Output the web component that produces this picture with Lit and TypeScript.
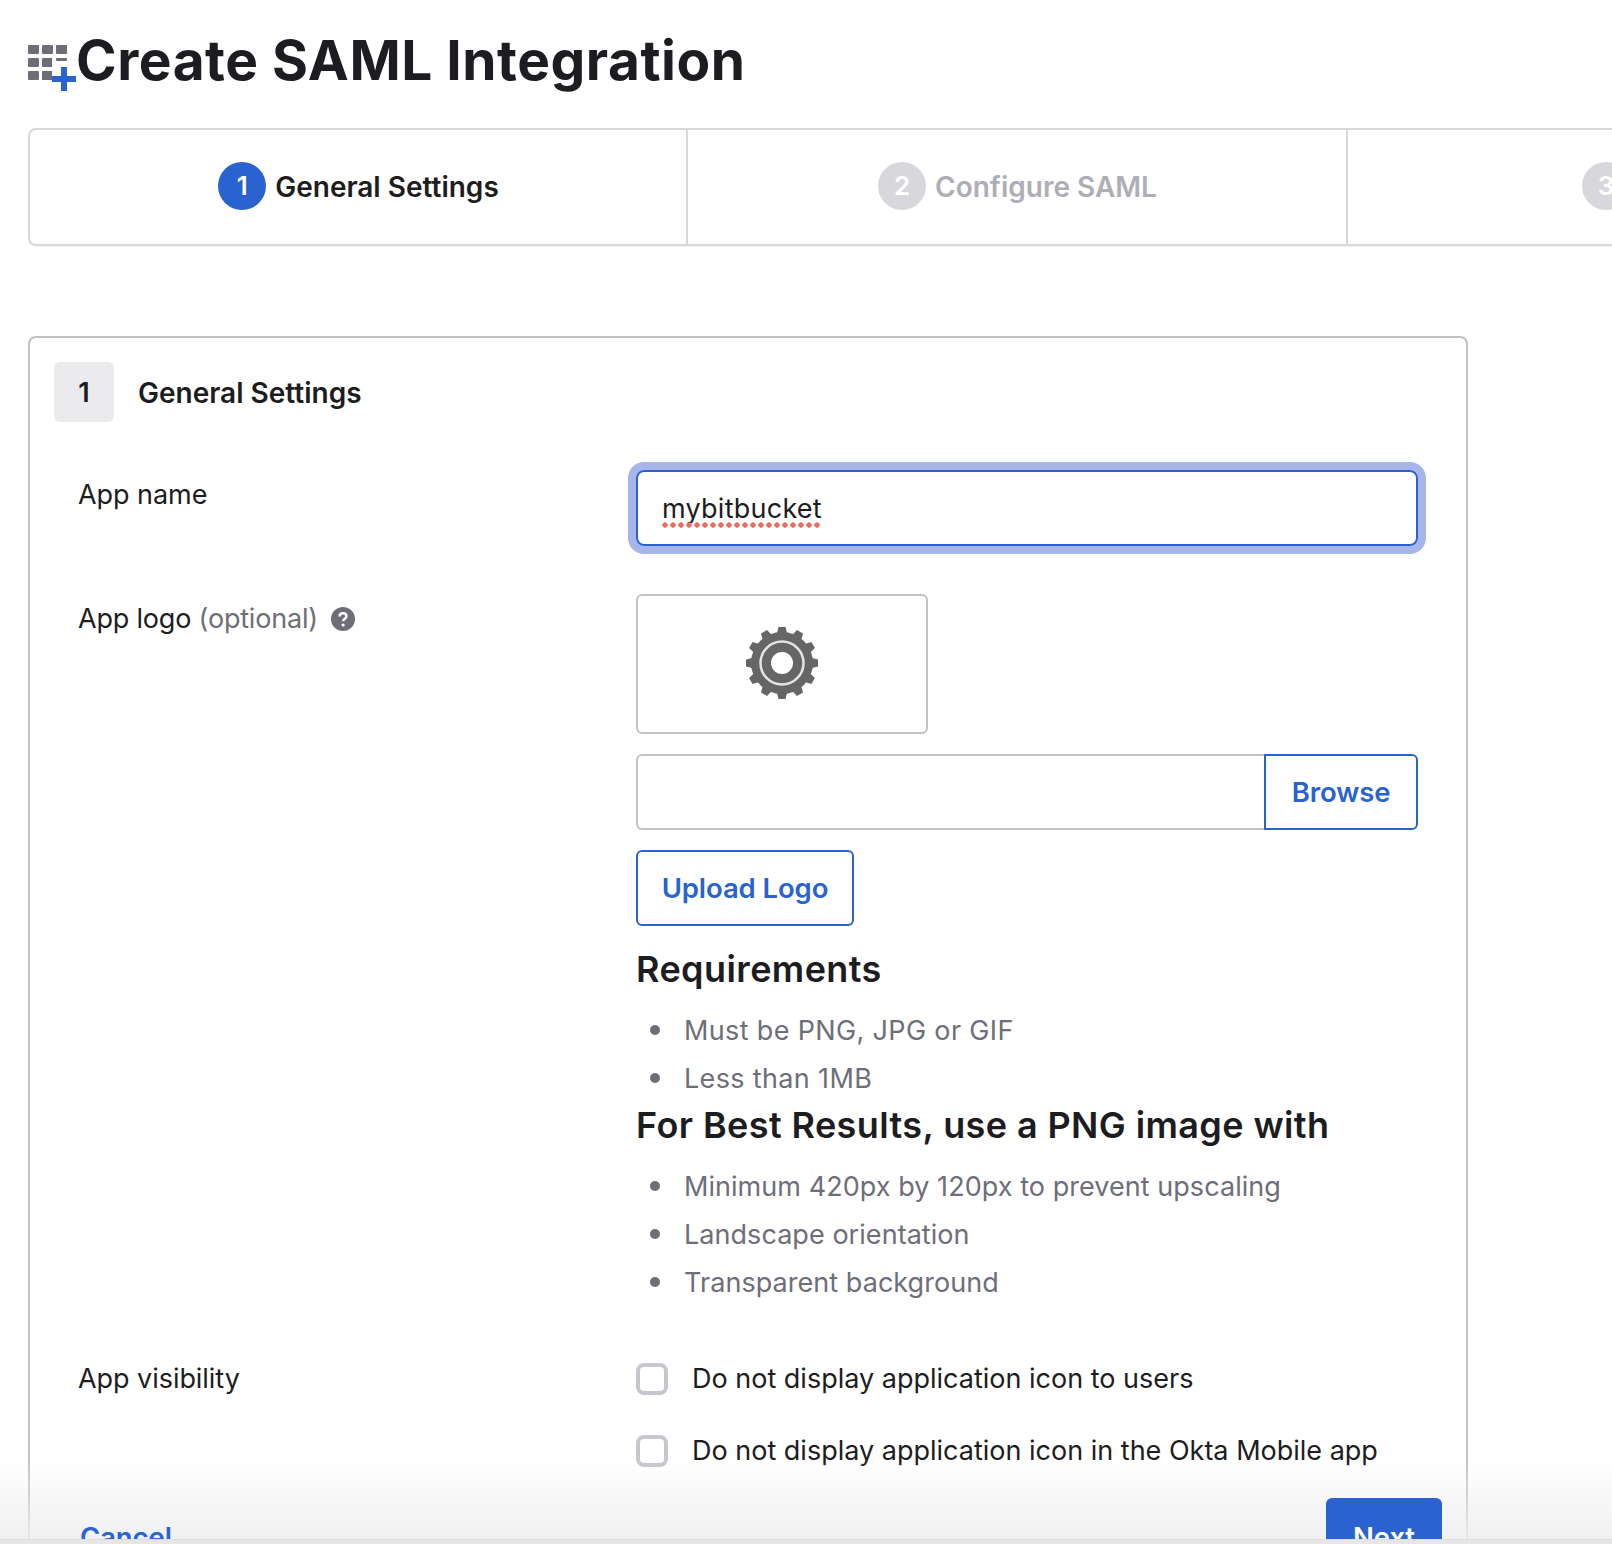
import { LitElement, html, css, svg } from "lit";
import { customElement } from "lit/decorators.js";

const teeth = Array.from({ length: 12 }, (_, i) => i * 30);

@customElement("app-root")
export class AppRoot extends LitElement {
  static styles = css`
    :host {
      display: block;
      position: relative;
      width: 1612px;
      height: 1544px;
      overflow: hidden;
      background: #fff;
      color: #1d1d21;
      font-family: Inter, "Liberation Sans", sans-serif;
      font-size: 27px;
      line-height: 36px;
    }
    .header {
      display: flex;
      align-items: flex-start;
      height: 128px;
      padding-left: 28px;
      box-sizing: border-box;
    }
    .header svg {
      margin-top: 44px;
      flex: none;
    }
    h1 {
      margin: 28px 0 0 -1px;
      font-size: 55px;
      line-height: 64px;
      font-weight: 650;
      letter-spacing: 0.53px;
      white-space: nowrap;
    }
    .stepper {
      display: flex;
      margin-left: 28px;
      width: 2000px;
      height: 118px;
      box-sizing: border-box;
      border: 2px solid #d7d7dc;
      border-right: 0;
      border-radius: 8px 0 0 8px;
      box-shadow: 0 1px 2px rgba(0, 0, 0, 0.06);
    }
    .step {
      flex: none;
      width: 660px;
      box-sizing: border-box;
      border-right: 2px solid #d7d7dc;
      padding: 0 0 2px 1px;
      display: flex;
      align-items: center;
      justify-content: center;
      gap: 9px;
      font-weight: 600;
      font-size: 28px;
      color: #aeaeb7;
    }
    .step .lbl {
      padding-top: 2px;
    }
    .step.active {
      width: 658px;
      color: #1d1d21;
    }
    .step.last {
      border-right: 0;
      justify-content: flex-start;
      padding-left: 234px;
    }
    .num {
      width: 48px;
      height: 48px;
      border-radius: 50%;
      background: #d7d7dc;
      color: #fff;
      display: flex;
      align-items: center;
      justify-content: center;
      font-size: 26px;
    }
    .active .num {
      background: #2a62d0;
    }
    .panel {
      margin: 90px 0 0 28px;
      width: 1440px;
      height: 1300px;
      box-sizing: border-box;
      border: 2px solid #c1c1c8;
      border-radius: 8px;
      padding: 24px 24px 0 24px;
    }
    .title {
      display: flex;
      align-items: center;
      gap: 24px;
      font-weight: 600;
      font-size: 28px;
    }
    .title div {
      padding-top: 2px;
    }
    .badge {
      width: 60px;
      height: 60px;
      box-sizing: border-box;
      padding-top: 2px;
      border-radius: 6px;
      background: #ebebed;
      font-size: 27px;
      display: flex;
      align-items: center;
      justify-content: center;
    }
    .row {
      display: grid;
      grid-template-columns: 558px 782px;
      margin-left: 24px;
    }
    .label {
      letter-spacing: -0.05px;
    }
    .logo-row .label {
      letter-spacing: -0.2px;
    }
    .label .muted {
      color: #6e6e78;
    }
    .help {
      display: inline-block;
      vertical-align: -3px;
      margin-left: 6px;
    }
    .name-row {
      margin-top: 48px;
    }
    .name-row .label {
      padding-top: 7px;
    }
    .text-input {
      position: relative;
      height: 76px;
      box-sizing: border-box;
      border: 2px solid #2a62d0;
      border-radius: 8px;
      box-shadow: 0 0 0 8px #a7b5e8;
      padding: 2px 0 0 24px;
      display: flex;
      align-items: center;
      letter-spacing: 0.25px;
    }
    .squiggle {
      position: absolute;
      left: 24px;
      top: 50px;
      width: 160px;
      height: 6px;
      background: radial-gradient(circle at 3px 3px, #ef6a60 2.4px, transparent 3px) 0 0 / 8px 6px repeat-x;
    }
    .logo-row {
      margin-top: 48px;
    }
    .logo-row .label {
      padding-top: 7px;
    }
    .logo-box {
      width: 292px;
      height: 140px;
      box-sizing: border-box;
      border: 2px solid #c1c1c8;
      border-radius: 6px;
      display: flex;
      align-items: center;
      justify-content: center;
    }
    .logo-box svg {
      margin-top: -3px;
      filter: blur(0.7px);
    }
    .file {
      display: flex;
      height: 76px;
      margin-top: 20px;
    }
    .file-input {
      flex: 1;
      box-sizing: border-box;
      border: 2px solid #c1c1c8;
      border-right: 0;
      border-radius: 6px 0 0 6px;
    }
    .btn {
      box-sizing: border-box;
      display: flex;
      align-items: center;
      justify-content: center;
      border: 2px solid #2a62d0;
      color: #2a62d0;
      font-weight: 600;
      font-size: 27.5px;
      letter-spacing: -0.1px;
      background: #fff;
    }
    .browse {
      width: 154px;
      border-radius: 0 6px 6px 0;
    }
    .upload {
      width: 218px;
      height: 76px;
      margin-top: 20px;
      border-radius: 6px;
    }
    h2 {
      margin: 0;
      font-size: 36px;
      line-height: 44px;
      font-weight: 600;
      letter-spacing: 0.4px;
    }
    h2.req {
      margin-top: 21px;
    }
    ul {
      list-style: none;
      margin: 0;
      padding: 0;
      color: #6e6e78;
    }
    li {
      height: 48px;
      display: flex;
      align-items: center;
      padding-left: 14px;
    }
    li::before {
      content: "";
      width: 10px;
      height: 10px;
      border-radius: 50%;
      background: #6e6e78;
      margin-right: 24px;
      margin-top: -3px;
    }
    ul.first {
      margin-top: 16px;
      letter-spacing: 0.35px;
    }
    ul.second {
      margin-top: 16px;
      letter-spacing: 0.05px;
    }
    .vis-row {
      margin-top: 56px;
    }
    .vis-row .label {
      margin-top: -2px;
    }
    .check {
      display: flex;
      align-items: center;
      gap: 24px;
      height: 32px;
      margin-bottom: 40px;
      white-space: nowrap;
    }
    .box {
      flex: none;
      width: 32px;
      height: 32px;
      box-sizing: border-box;
      border: 4px solid #c6c6cd;
      border-radius: 8px;
      background: #fff;
    }
    .footer {
      position: relative;
      z-index: 1;
      display: flex;
      justify-content: space-between;
      margin-top: -9px;
      padding-left: 26px;
    }
    .cancel {
      color: #2a62d0;
      font-weight: 600;
      font-size: 27.5px;
      letter-spacing: -0.1px;
      padding-top: 21px;
    }
    .next {
      width: 116px;
      height: 76px;
      box-sizing: border-box;
      border-radius: 6px;
      padding-top: 2px;
      background: #2a62d0;
      color: #fff;
      font-weight: 600;
      font-size: 27.5px;
      letter-spacing: -0.1px;
      display: flex;
      align-items: center;
      justify-content: center;
    }
    .fade {
      position: absolute;
      left: 0;
      right: 0;
      bottom: 0;
      height: 84px;
      background: linear-gradient(rgba(238, 238, 238, 0), rgba(238, 238, 238, 0.95));
      pointer-events: none;
    }
    .strip {
      position: absolute;
      z-index: 2;
      left: 0;
      right: 0;
      bottom: 0;
      height: 5px;
      background: #e6e6e6;
      border-top: 1px solid #dcdcdc;
      box-sizing: border-box;
    }
  `;

  private gridIcon() {
    const c = "#6e6e78";
    return html`<svg width="49" height="47" viewBox="0 0 49 47">
      ${[0, 14, 28].flatMap((x) =>
        [0, 13, 26].map(
          (y) => svg`<rect x=${x} y=${y + 1} width="11" height="9" rx="1" fill=${c}></rect>`
        )
      )}
      <rect x="24" y="13" width="24" height="34" fill="#fff"></rect>
      <rect x="28" y="14" width="11" height="3" rx="1" fill=${c}></rect>
      <rect x="14" y="27" width="9" height="9" rx="1" fill=${c}></rect>
      <path d="M24 35h24M36 23v24" stroke="#2a62d0" stroke-width="6" fill="none"></path>
    </svg>`;
  }

  private gear() {
    return html`<svg width="74" height="74" viewBox="-37 -37 74 74">
      ${teeth.map(
        (a) => svg`<path d="M-5 -30 L-3.5 -36 L3.5 -36 L5 -30 Z" fill="#666" transform="rotate(${a})"></path>`
      )}
      <circle r="31" fill="#666"></circle>
      <circle r="21.5" fill="none" stroke="#e4e4e4" stroke-width="2.5"></circle>
      <circle r="11" fill="#fff"></circle>
    </svg>`;
  }

  render() {
    return html`
      <div class="header">
        ${this.gridIcon()}
        <h1>Create SAML Integration</h1>
      </div>
      <div class="stepper">
        <div class="step active"><span class="num">1</span><span class="lbl">General Settings</span></div>
        <div class="step"><span class="num">2</span><span class="lbl">Configure SAML</span></div>
        <div class="step last"><span class="num">3</span></div>
      </div>
      <div class="panel">
        <div class="title"><span class="badge">1</span><div>General Settings</div></div>
        <div class="row name-row">
          <div class="label">App name</div>
          <div class="text-input">mybitbucket<span class="squiggle"></span></div>
        </div>
        <div class="row logo-row">
          <div class="label">
            App logo <span class="muted">(optional)</span>
            <svg class="help" width="24" height="24" viewBox="0 0 24 24">
              <circle cx="12" cy="12" r="12" fill="#6e6e78"></circle>
              <path d="M8.6 9.4c0-2 1.5-3.2 3.4-3.2s3.4 1.2 3.4 3c0 2.4-3.3 2.6-3.3 5" fill="none" stroke="#fff" stroke-width="2.4"></path>
              <circle cx="12.1" cy="18" r="1.6" fill="#fff"></circle>
            </svg>
          </div>
          <div>
            <div class="logo-box">${this.gear()}</div>
            <div class="file">
              <div class="file-input"></div>
              <div class="btn browse">Browse</div>
            </div>
            <div class="btn upload">Upload Logo</div>
            <h2 class="req">Requirements</h2>
            <ul class="first">
              <li>Must be PNG, JPG or GIF</li>
              <li>Less than 1MB</li>
            </ul>
            <h2>For Best Results, use a PNG image with</h2>
            <ul class="second">
              <li>Minimum 420px by 120px to prevent upscaling</li>
              <li>Landscape orientation</li>
              <li>Transparent background</li>
            </ul>
          </div>
        </div>
        <div class="row vis-row">
          <div class="label">App visibility</div>
          <div>
            <div class="check"><span class="box"></span>Do not display application icon to users</div>
            <div class="check"><span class="box"></span>Do not display application icon in the Okta Mobile app</div>
          </div>
        </div>
        <div class="footer">
          <div class="cancel">Cancel</div>
          <div class="next">Next</div>
        </div>
      </div>
      <div class="fade"></div>
      <div class="strip"></div>
    `;
  }
}
